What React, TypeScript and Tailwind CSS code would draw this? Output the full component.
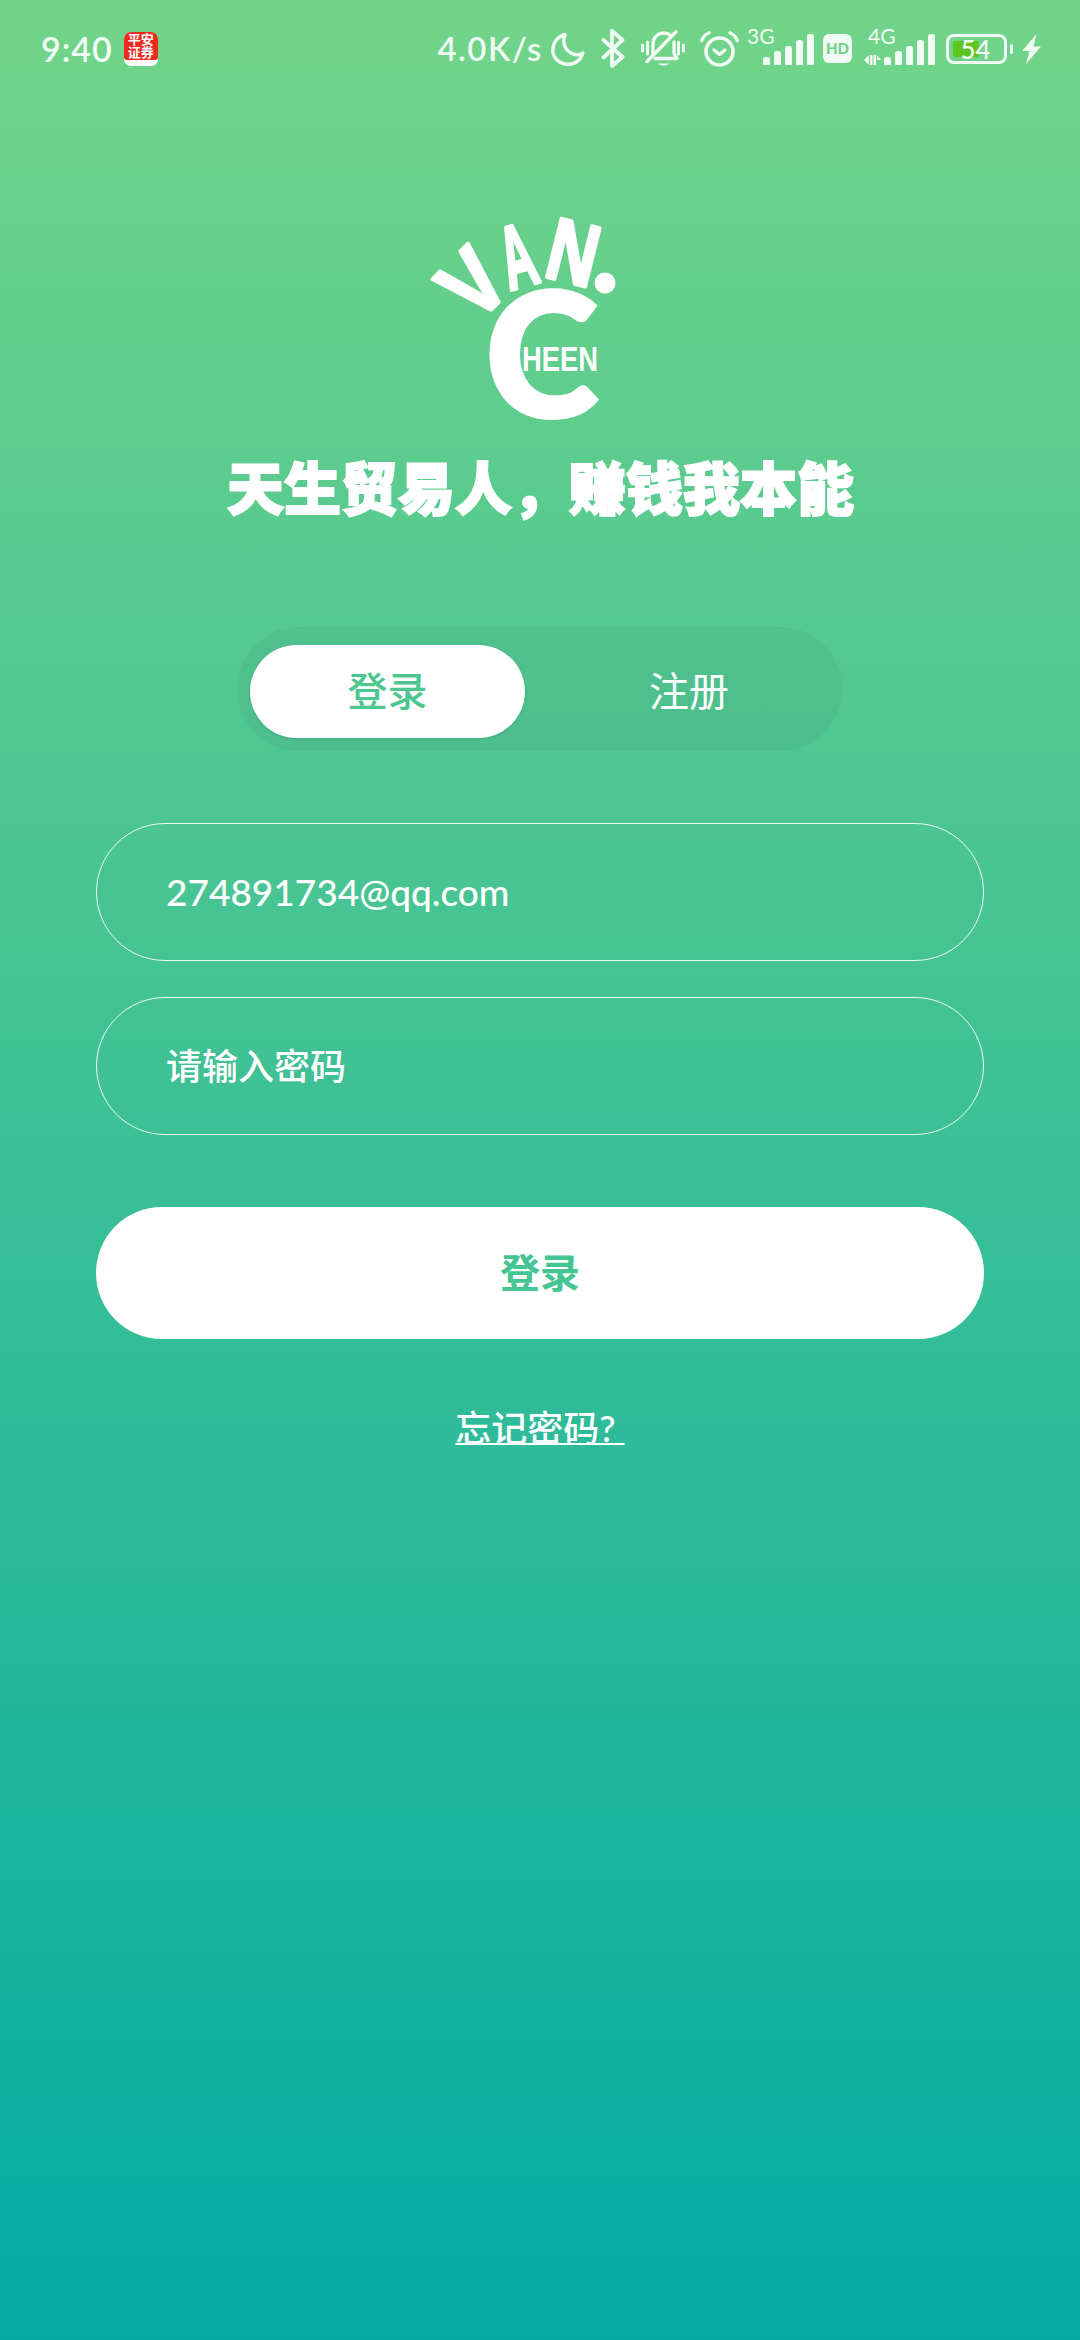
const FONT = "font-['Lato','Noto_Sans_CJK_SC',sans-serif]";

function Moon() {
  return (
    <svg width="34" height="34" viewBox="0 0 34 34" fill="none" stroke="#f0fbf3" strokeWidth="3.400" strokeLinejoin="round" className="ml-[8px]">
      <path d="M14 2.500C6.500 4.500 1.800 10.500 1.800 18c0 8 6.500 14.200 15 14.200 7.500 0 12.800-4 15-11.200-2 1.500-5 2-7.500 1.500C15 21 10.500 11.500 14 2.500Z" />
    </svg>
  );
}

function Bluetooth() {
  return (
    <svg width="24" height="39" viewBox="0 0 24 39" fill="none" stroke="#f0fbf3" strokeWidth="3.800" strokeLinecap="round" strokeLinejoin="round" className="ml-[16px]">
      <path d="M2.500 11 21.500 28 11 37V2l10.500 9L2.500 28.500" />
    </svg>
  );
}

function BellOff() {
  return (
    <svg width="44" height="37" viewBox="0 0 44 37" fill="none" stroke="#f0fbf3" strokeLinecap="round" className="ml-[16px]">
      <path d="M1.500 15v6M6.500 12v12M37.500 12v12M42.500 15v6" strokeWidth="3" />
      <g strokeWidth="3.400" strokeLinejoin="round">
        <path d="M12 25V14C12 7 17 3 23 3c3 0 5 1 7 2.500" />
        <path d="M33 12v11c0 2 3 3 3 5.500H14" />
        <path d="M35 1.800 6 31.500" />
      </g>
      <path d="M17 33.500h11c-1 2.500-9.500 2.500-11 0Z" fill="#f0fbf3" stroke="none" />
    </svg>
  );
}

function AlarmClock() {
  return (
    <svg width="39" height="36" viewBox="0 0 39 36" fill="none" stroke="#f0fbf3" strokeLinecap="round" strokeLinejoin="round" className="ml-[15px]">
      <circle cx="19.500" cy="20.500" r="13.500" strokeWidth="3.600" />
      <path d="M14 19l5.500 4.500L25 19" strokeWidth="3.200" />
      <path d="M1.800 9.500C3 6 5.500 3.500 9 1.800M37.200 9.500C36 6 33.500 3.500 30 1.800" strokeWidth="3.400" />
    </svg>
  );
}

function SignalBars({ label, arrows }: { label: string; arrows?: boolean }) {
  const bars = [8, 14, 19, 25, 31];
  return (
    <div className="relative h-[38px] w-[47px]">
      <span className="absolute left-[-16px] top-[-4px] text-[21px] leading-[20px] text-[#f0fbf3]">{label}</span>
      {arrows && (
        <svg width="17" height="10" viewBox="0 0 17 10" fill="#f0fbf3" className="absolute left-[-20px] bottom-[3px]">
          <path d="M0 5l5 5V0ZM6 0h2.500v10H6ZM9.500 0H12v10H9.500ZM13 0l4 5h-4Z" />
        </svg>
      )}
      <div className="absolute bottom-[3px] left-0 flex items-end gap-[4px]">
        {bars.map((h) => (
          <div key={h} className="w-[7px] rounded-t-[2.500px] rounded-b-[1px] bg-[#f0fbf3]" style={{ height: h }} />
        ))}
      </div>
    </div>
  );
}

function StatusBar() {
  return (
    <div className={`flex h-[96px] items-center justify-between pl-[41px] pr-[39px] pt-[1px] text-[#f0fbf3] ${FONT}`}>
      <div className="flex items-center">
        <span className="text-[34px] font-semibold leading-none tracking-[1px]">9:40</span>
        <div className="ml-[11px] flex h-[34px] w-[34px] flex-col overflow-hidden rounded-[7px] bg-white">
          <div className="flex h-[28px] flex-col items-center justify-center rounded-b-[3px] bg-[#ee2a20] text-[13px] font-bold leading-[12.500px] text-white">
            <span>平安</span>
            <span>证券</span>
          </div>
        </div>
      </div>
      <div className="flex items-center">
        <span className="text-[33px] font-semibold leading-none tracking-[1.500px]">4.0K/s</span>
        <Moon />
        <Bluetooth />
        <BellOff />
        <AlarmClock />
        <div className="ml-[24px]">
          <SignalBars label="3G" />
        </div>
        <div className="ml-[13px] flex h-[29px] w-[29px] items-center justify-center rounded-[6px] bg-[#f0fbf3] text-[15px] font-black leading-none text-[#6fd389]">
          HD
        </div>
        <div className="ml-[32px]">
          <SignalBars label="4G" arrows />
        </div>
        <div className="relative ml-[15px] h-[30px] w-[61px] rounded-[8px] border-[3px] border-[#f0fbf3]">
          <div className="absolute left-[4px] top-[4px] h-[16px] w-[26px] rounded-[2px] bg-[#5ec41f]" />
          <span className="absolute inset-0 flex items-center justify-center pr-[2px] text-[26px] font-medium leading-none text-[#f0fbf3]">54</span>
        </div>
        <div className="ml-[3px] h-[10px] w-[3px] rounded-full bg-[#f0fbf3]" />
        <svg width="19" height="30" viewBox="0 0 19 30" fill="#f0fbf3" className="ml-[9px]">
          <path d="M14.500 0 0 17h7.500L4 30 19 12.500h-7.500Z" />
        </svg>
      </div>
    </div>
  );
}

function Logo() {
  const font = { fontFamily: "'Liberation Sans', sans-serif", fontWeight: 700 };
  return (
    <svg width="188" height="206" viewBox="0 0 188 206" fill="white" style={font} textAnchor="middle" className="overflow-visible">
      <g stroke="white" strokeWidth="3.500" strokeLinejoin="round">
        <text transform="translate(67 90) rotate(-45) scale(0.85 1)" fontSize="92">V</text>
        <text transform="translate(98 70) rotate(-16) scale(0.52 1)" fontSize="90">A</text>
        <text transform="translate(138 66) rotate(14) scale(0.78 1)" fontSize="88">N</text>
      </g>
      <circle cx="177" cy="67" r="10.500" />
      <text transform="translate(114 203)" fontSize="176" style={{ fontFamily: "'Lato', sans-serif", fontWeight: 800 }}>C</text>
      <text transform="translate(132 155) scale(0.780 1)" fontSize="35">HEEN</text>
    </svg>
  );
}

export default function App() {
  return (
    <div className={`flex h-[2340px] w-[1080px] flex-col bg-[linear-gradient(180deg,#72d489_0%,#03aba3_100%)] text-white ${FONT}`}>
      <StatusBar />

      <div className="mt-[120px] flex pl-[428px]">
        <Logo />
      </div>
      <div className="mt-[31px] flex h-[70px] items-center justify-center whitespace-nowrap pl-[1px] text-[57px] font-black leading-none [-webkit-text-stroke:2px_white]">
        {"天生贸易人\uFF0C赚钱我本能"}
      </div>

      <div className="mt-[104px] ml-[237px] flex h-[124px] w-[605px] items-center rounded-full bg-[#4bb888]/50 pl-[13px] pt-[4px]">
        <div className="flex h-[93px] w-[275px] shrink-0 items-center justify-center rounded-full bg-white text-[40px] font-medium text-[#4cc790] shadow-[0_1px_3px_rgba(0,0,0,0.12)]">
          登录
        </div>
        <div className="flex h-[93px] w-[317px] shrink-0 items-center justify-center pl-[11px] text-[40px] text-white">注册</div>
      </div>

      <div className="mx-[96px] mt-[72px] flex flex-col gap-[36px]">
        <div className="flex h-[138px] items-center rounded-full border border-white/90 pb-[1px] pl-[69px] text-[37px] font-medium leading-none">
          274891734@qq.com
        </div>
        <div className="flex h-[138px] items-center rounded-full border border-white/90 pl-[69px] text-[36px] font-medium leading-none">
          请输入密码
        </div>
      </div>

      <div className="mx-[96px] mt-[72px] flex h-[132px] items-center justify-center rounded-full bg-white text-[40px] font-semibold text-[#44c592]">
        登录
      </div>

      <div className="mt-[64px] flex justify-center">
        <span className="whitespace-pre text-[36px] font-medium leading-[50px] underline decoration-[2px] underline-offset-[1px]">忘记密码? </span>
      </div>
    </div>
  );
}
